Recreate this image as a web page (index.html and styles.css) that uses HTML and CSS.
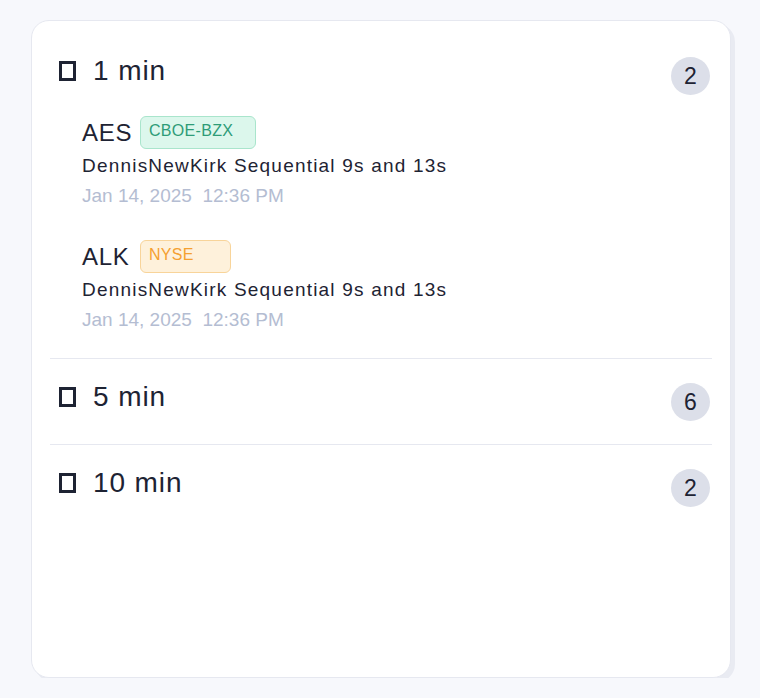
FILE: index.html
```html
<!DOCTYPE html>
<html>
<head>
<meta charset="utf-8">
<link rel="stylesheet" href="styles.css">
</head>
<body>
<div class="card">
  <section class="group">
    <div class="group-head">
      <div class="group-title"><span class="box"></span><span>1 min</span></div>
      <span class="count">2</span>
    </div>
    <div class="items">
      <div class="item">
        <div class="item-top"><span class="sym">AES</span><span class="tag tag-green">CBOE-BZX</span></div>
        <div class="desc">DennisNewKirk Sequential 9s and 13s</div>
        <div class="time">Jan 14, 2025&nbsp; 12:36 PM</div>
      </div>
      <div class="item">
        <div class="item-top"><span class="sym">ALK</span><span class="tag tag-orange">NYSE</span></div>
        <div class="desc">DennisNewKirk Sequential 9s and 13s</div>
        <div class="time">Jan 14, 2025&nbsp; 12:36 PM</div>
      </div>
    </div>
  </section>
  <section class="group">
    <div class="group-head">
      <div class="group-title"><span class="box"></span><span>5 min</span></div>
      <span class="count">6</span>
    </div>
  </section>
  <section class="group">
    <div class="group-head">
      <div class="group-title"><span class="box"></span><span>10 min</span></div>
      <span class="count">2</span>
    </div>
  </section>
</div>
</body>
</html>
```
FILE: styles.css
```css
html, body {
  margin: 0;
  padding: 0;
}
body {
  background: #f7f8fc;
  font-family: "Liberation Sans", Arial, sans-serif;
  color: #1e2333;
}
.card {
  box-sizing: border-box;
  width: 700px;
  height: 658px;
  margin: 20px 0 0 31px;
  padding: 12px 18px 0;
  background: #ffffff;
  border: 1px solid #e6e8f0;
  border-radius: 18px;
  box-shadow: 4px 4px 0 #e9ebf2;
}
.group {
  padding: 22px 0 21px;
  border-bottom: 1px solid #e6e8f0;
}
.group:last-child {
  border-bottom: none;
}
.group-head {
  display: flex;
  align-items: center;
  justify-content: space-between;
  height: 42px;
  padding: 0 2px 0 9px;
}
.group-title {
  display: flex;
  align-items: center;
  gap: 17px;
  font-size: 28px;
  line-height: 32px;
  letter-spacing: 0.9px;
  margin-bottom: 10px;
}
.box {
  box-sizing: border-box;
  width: 17px;
  height: 20px;
  border: 3px solid #1e2333;
}
.count {
  display: flex;
  align-items: center;
  justify-content: center;
  width: 39px;
  height: 38px;
  border-radius: 50%;
  background: #dcdfe9;
  font-size: 23px;
}
.items {
  display: flex;
  flex-direction: column;
  gap: 31px;
  padding: 19px 0 4px 32px;
}
.item-top {
  display: flex;
  align-items: center;
  gap: 8px;
}
.sym {
  width: 50px;
  font-size: 24px;
  letter-spacing: 0.03em;
}
.tag {
  box-sizing: border-box;
  height: 33px;
  padding: 5px 8px 0;
  border: 1px solid;
  border-radius: 6px;
  font-size: 16px;
  letter-spacing: 0.3px;
}
.tag-green {
  width: 116px;
  color: #2e9c78;
  background: #dcf7ec;
  border-color: #a9e5cc;
}
.tag-orange {
  width: 91px;
  color: #f5a030;
  background: #fef1db;
  border-color: #f8d49a;
}
.desc {
  margin-top: 4px;
  font-size: 19px;
  line-height: 26px;
  letter-spacing: 1.2px;
}
.time {
  margin-top: 4px;
  font-size: 19px;
  line-height: 26px;
  color: #b4bdd2;
}
```
